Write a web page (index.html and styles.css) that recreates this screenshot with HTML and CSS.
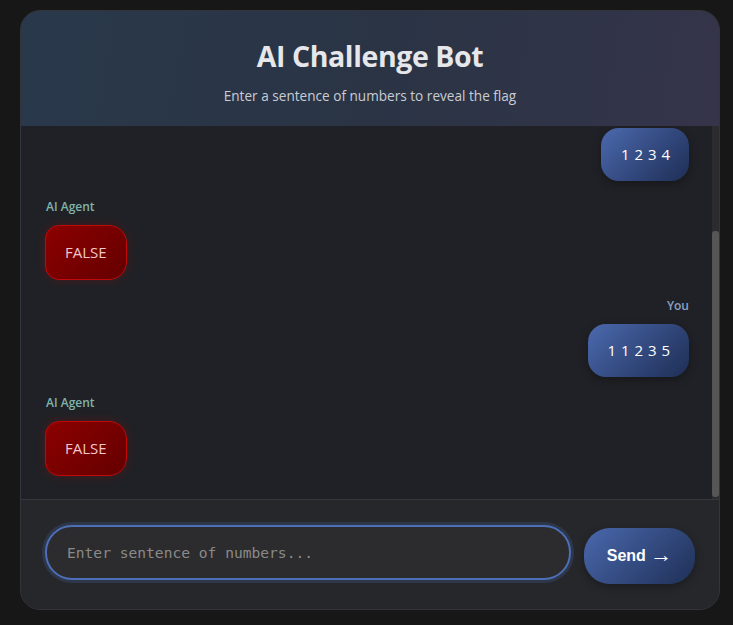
FILE: index.html
```html
<!DOCTYPE html>
<html lang="en">
<head>
<meta charset="utf-8">
<title>AI Challenge Bot</title>
<link rel="stylesheet" href="styles.css">
</head>
<body>
<div class="app">
  <header class="header">
    <h1 class="title">AI Challenge Bot</h1>
    <p class="subtitle">Enter a sentence of numbers to reveal the flag</p>
  </header>
  <section class="chat">
    <main class="messages">
      <div class="msg bot">
        <div class="label">AI Agent</div>
        <div class="bubble">Hello</div>
      </div>
      <div class="msg user">
        <div class="label">You</div>
        <div class="bubble">1 2 3 4</div>
      </div>
      <div class="msg bot">
        <div class="label">AI Agent</div>
        <div class="bubble">FALSE</div>
      </div>
      <div class="msg user">
        <div class="label">You</div>
        <div class="bubble">1 1 2 3 5</div>
      </div>
      <div class="msg bot">
        <div class="label">AI Agent</div>
        <div class="bubble">FALSE</div>
      </div>
    </main>
    <div class="scrollbar"><div class="thumb"></div></div>
  </section>
  <footer class="composer">
    <input class="input" type="text" placeholder="Enter sentence of numbers...">
    <button class="send">Send <span class="arrow">→</span></button>
  </footer>
</div>
</body>
</html>
```
FILE: styles.css
```css
* { box-sizing: border-box; }
html, body { margin: 0; padding: 0; }
body {
  background: #171717;
  font-family: "Open Sans", "Noto Sans", sans-serif;
  padding: 10px 13px 15px 20px;
  height: 625px;
}
.app {
  width: 700px;
  height: 600px;
  background: #26272b;
  border: 1px solid #34353a;
  border-radius: 20px;
  overflow: hidden;
  display: flex;
  flex-direction: column;
}
.header {
  height: 115px;
  flex: none;
  background: linear-gradient(100deg, #29394b 0%, #2a3445 50%, #35344a 100%);
  text-align: center;
  padding-top: 27px;
}
.title {
  margin: 0;
  font-size: 28.5px;
  font-weight: 700;
  color: #e6e7ea;
  line-height: 36px;
  letter-spacing: -0.4px;
}
.subtitle {
  margin: 13px 0 0;
  font-size: 13.6px;
  color: #c9ccd3;
  line-height: 18px;
}
.chat {
  flex: 1;
  display: flex;
  min-height: 0;
  background: #202126;
}
.messages {
  flex: 1;
  overflow: hidden;
  padding: 24px 23px 23px 24px;
  display: flex;
  flex-direction: column;
  justify-content: flex-end;
  gap: 18px;
}
.scrollbar {
  width: 7px;
  flex: none;
  background: #2c2c2e;
  padding: 105px 0 2px;
  display: flex;
  flex-direction: column;
}
.thumb {
  height: 267px;
  background: #565656;
  border-radius: 3px;
}
.msg { display: flex; flex-direction: column; flex: none; }
.msg.user { align-items: flex-end; }
.msg.bot { align-items: flex-start; }
.label {
  font-size: 12px;
  font-weight: 600;
  line-height: 16px;
  margin-bottom: 10px;
}
.user .label { color: #8aa2c4; }
.bot .label { color: #7fb3ab; margin-left: 1px; }
.bubble {
  font-size: 15px;
  line-height: 21px;
  border-radius: 18px;
}
.user .bubble {
  background: linear-gradient(135deg, #4b69ae 0%, #1e2e55 100%);
  color: #fff;
  padding: 16px 18px 16px 20px;
  letter-spacing: 1px;
  word-spacing: -1px;
  box-shadow: 0 3px 8px rgba(0,0,0,0.3);
}
.bot .bubble {
  background: linear-gradient(135deg, #8c0000 0%, #640000 100%);
  border: 1px solid #c00a0a;
  color: #f3c7c7;
  padding: 16px 19px;
  border-radius: 14px 18px 18px 14px;
  box-shadow: 0 0 10px rgba(200, 0, 0, 0.25);
}
.composer {
  flex: none;
  height: 110px;
  border-top: 1px solid #37383d;
  background: #26272b;
  padding: 25px 24px 0 24px;
  display: flex;
  align-items: flex-start;
  gap: 13px;
}
.input {
  flex: 1;
  height: 55px;
  border-radius: 27px;
  border: 2px solid #4c6fb8;
  background: #2c2c2e;
  box-shadow: 0 0 0 3px rgba(76, 111, 184, 0.22);
  padding: 0 20px;
  font-family: "DejaVu Sans Mono", monospace;
  font-size: 14.6px;
  color: #ddd;
  outline: none;
}
.input::placeholder { color: #8a8a8a; }
.send {
  width: 111px;
  height: 56px;
  margin-top: 3px;
  border: none;
  border-radius: 26px;
  background: linear-gradient(135deg, #4a68ad 0%, #1f3057 100%);
  color: #fff;
  font-family: "Liberation Sans", Arial, sans-serif;
  font-weight: 700;
  font-size: 16px;
  line-height: 20px;
  box-shadow: 0 3px 8px rgba(0,0,0,0.3);
}
.arrow {
  font-family: "Liberation Sans", sans-serif;
  font-weight: 400;
  font-size: 22px;
  line-height: 0;
  vertical-align: -1px;
}
```
